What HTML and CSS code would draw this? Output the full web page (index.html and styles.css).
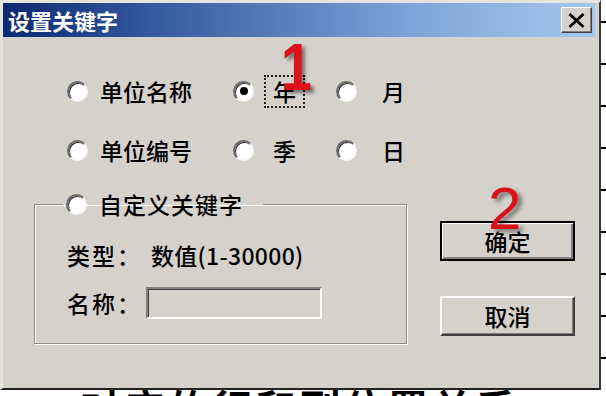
FILE: index.html
```html
<!DOCTYPE html>
<html lang="zh">
<head>
<meta charset="utf-8">
<title>设置关键字</title>
<link rel="stylesheet" href="styles.css">
</head>
<body>
<div class="screen">
  <div class="top">
    <div class="dialog">
      <div class="titlebar">
        <span class="title">设置关键字</span>
        <span class="close">
          <svg width="17" height="15" viewBox="0 0 17 15"><path d="M1.5 1 L15.5 14 M15.5 1 L1.5 14" stroke="#000" stroke-width="2.8" fill="none"/></svg>
        </span>
      </div>
      <div class="content">
        <div class="left">
          <div class="options">
            <div class="opt c1"><span class="radio"></span><span class="lbl">单位名称</span></div>
            <div class="opt c2"><span class="radio checked"></span><span class="lbl focus">年</span></div>
            <div class="opt c3"><span class="radio"></span><span class="lbl">月</span></div>
            <div class="opt c1"><span class="radio"></span><span class="lbl">单位编号</span></div>
            <div class="opt c2"><span class="radio"></span><span class="lbl">季</span></div>
            <div class="opt c3"><span class="radio"></span><span class="lbl">日</span></div>
          </div>
          <fieldset class="group">
            <legend class="legend"><span class="radio"></span><span class="lbl">自定义关键字</span></legend>
            <div class="field"><span class="key">类型：</span><span class="val">数值(1-30000)</span></div>
            <div class="field"><span class="key">名称：</span><span class="input"></span></div>
          </fieldset>
        </div>
        <div class="buttons">
          <div class="btn default">确定</div>
          <div class="btn">取消</div>
        </div>
      </div>
      <div class="mark m1">1</div>
      <div class="mark m2">2</div>
    </div>
    <div class="ticks"></div>
  </div>
  <div class="below"><span class="behind">对应的行和列位置关系</span></div>
</div>
</body>
</html>
```
FILE: styles.css
```css
html, body {
  margin: 0;
  padding: 0;
  background: #fff;
}
.screen {
  width: 606px;
  height: 396px;
  overflow: hidden;
  display: flex;
  flex-direction: column;
  font-family: "Noto Sans CJK SC", sans-serif;
  color: #000;
}
.top {
  display: flex;
  height: 390px;
  flex: none;
}
.dialog {
  position: relative;
  flex: none;
  width: 601px;
  height: 390px;
  box-sizing: border-box;
  background: #d5d2cc;
  border-top: 3px solid #e6e4df;
  border-left: 3px solid #e6e4df;
  border-right: 2px solid #3a3a3a;
  border-bottom: 2px solid #222;
}
.titlebar {
  height: 34px;
  margin-right: 4px;
  display: flex;
  align-items: center;
  justify-content: space-between;
  background: linear-gradient(to right, #0c2870 0%, #33599f 25%, #7fa6da 70%, #a6c8ee 100%);
}
.title {
  color: #fff;
  font-size: 22px;
  font-weight: 700;
  padding-left: 5px;
  line-height: 30px;
}
.close {
  width: 31px;
  height: 26px;
  box-sizing: border-box;
  margin-right: 3px;
  display: flex;
  align-items: center;
  justify-content: center;
  background: #d5d2cc;
  border: 1px solid;
  border-color: #fff #404040 #404040 #fff;
  box-shadow: inset -1px -1px 0 #808080;
}
.content {
  display: flex;
  padding-left: 31px;
}
.left {
  width: 373px;
}
.options {
  margin-top: 39px;
  padding-left: 33px;
  display: grid;
  grid-template-columns: 166px 103px auto;
  grid-auto-rows: 30px;
  row-gap: 29px;
}
.opt {
  display: flex;
  align-items: center;
}
.radio {
  position: relative;
  flex: none;
  width: 21px;
  height: 21px;
  box-sizing: border-box;
  border-radius: 50%;
  background: #fff;
  border: 2px solid;
  border-color: #6a6a6a #f6f6f6 #f6f6f6 #6a6a6a;
  box-shadow: inset 1px 1px 0 #303030;
}
.radio.checked::after {
  content: "";
  position: absolute;
  left: 4.5px;
  top: 4.5px;
  width: 8px;
  height: 8px;
  border-radius: 50%;
  background: #000;
}
.lbl {
  font-size: 23px;
  font-weight: 500;
  line-height: 29px;
  white-space: nowrap;
}
.c1 .lbl { margin-left: 12px; }
.c2 .lbl {
  margin-left: 10px;
  padding: 0 7px;
  border: 2px dotted transparent;
}
.c2 .lbl.focus { border-color: #222; }
.c3 .lbl { margin-left: 25px; }
.group {
  margin: 24px 0 0 0;
  padding: 21px 0 23px 32px;
  border: 1px solid #8a8a8a;
  box-shadow: 1px 1px 0 #fff, inset 1px 1px 0 #fff;
  min-width: 0;
}
.legend {
  display: flex;
  align-items: center;
  margin-left: -4px;
  padding: 0 20px 0 3px;
  height: 30px;
}
.legend .lbl { margin-left: 12px; letter-spacing: 1px; }
.field {
  display: flex;
  align-items: center;
  font-size: 23px;
  font-weight: 500;
  white-space: nowrap;
}
.field + .field { margin-top: 16px; }
.field:first-of-type { height: 30px; }
.key { flex: none; width: 70px; letter-spacing: 2px; }
.val { margin-left: 14px; letter-spacing: 0.3px; }
.input {
  flex: none;
  margin-left: 9px;
  width: 176px;
  height: 32px;
  box-sizing: border-box;
  border: 2px solid;
  border-color: #808080 #fff #fff #808080;
  box-shadow: inset 1px 1px 0 #404040, inset -1px -1px 0 #d5d2cc;
  background: #d5d2cc;
}
.buttons {
  margin-left: 33px;
  margin-top: 184px;
  display: flex;
  flex-direction: column;
  gap: 35px;
}
.btn {
  width: 135px;
  height: 40px;
  box-sizing: border-box;
  display: flex;
  align-items: center;
  justify-content: center;
  font-size: 23px;
  font-weight: 500;
  border: 2px solid;
  border-color: #fff #404040 #404040 #fff;
  box-shadow: inset -1px -1px 0 #808080;
}
.btn.default {
  border: 2px solid #000;
  box-shadow: inset 1px 1px 0 #fff, inset -2px -2px 0 #808080;
}
.mark {
  position: absolute;
  font-family: "Liberation Sans", sans-serif;
  line-height: 1;
  color: #dc121a;
  text-shadow: 4px 3px 4px rgba(0, 0, 0, 0.45);
}
.m1 {
  left: 275px;
  top: 31px;
  font-size: 66px;
  font-weight: 700;
  transform: scaleX(0.85);
}
.m2 {
  left: 485px;
  top: 176px;
  font-size: 60px;
}
.ticks {
  flex: none;
  width: 5px;
  background: repeating-linear-gradient(to bottom, #fff 0, #fff 21px, #000 21px, #000 23px, #fff 23px, #fff 42px);
}
.below {
  flex: none;
  height: 6px;
  overflow: hidden;
  background: #fff;
  padding-left: 80px;
}
.behind {
  display: block;
  font-size: 40px;
  font-weight: 700;
  line-height: 40px;
  margin-top: -3px;
  letter-spacing: 4px;
}
```
